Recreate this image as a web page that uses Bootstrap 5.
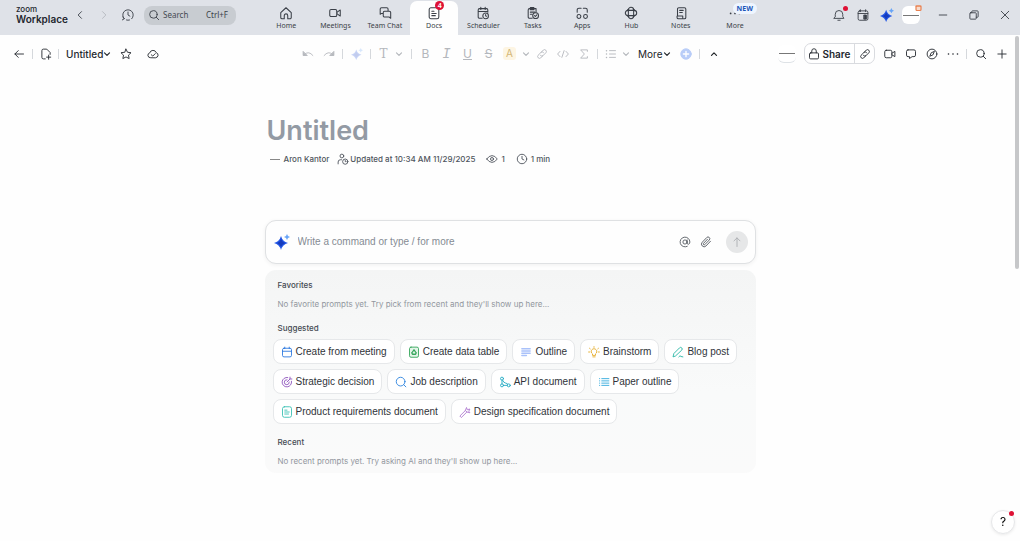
<!DOCTYPE html>
<html lang="en">
<head>
<meta charset="utf-8">
<meta name="viewport" content="width=device-width, initial-scale=1">
<title>Untitled - Zoom Docs</title>
<link href="https://cdn.jsdelivr.net/npm/bootstrap@5.3.0/dist/css/bootstrap.min.css" rel="stylesheet">
<style>
  body { font-family: Inter, "Liberation Sans", sans-serif; font-size: 10px; line-height: 14px; color: #2b2f36; background: #fefefe; }
  button { font-family: inherit; }
  svg { display: block; fill: none; stroke: currentColor; stroke-width: 1.2; stroke-linecap: round; stroke-linejoin: round; }
  .i8 { width: 8px; height: 8px; }
  .i12 { width: 12px; height: 12px; }
  .i14 { width: 14px; height: 14px; }
  .i16 { width: 16px; height: 16px; }

  /* window bar */
  .titlebar { height: 35px; background: #dfe2e8; color: #3a3f47; font-family: "Noto Sans", sans-serif; }
  .tb-left { width: 262px; height: 30px; padding-left: 16px; }
  .tb-right { width: 255px; height: 30px; }
  .brand { width: 52px; font-family: Inter, sans-serif; color: #23272e; line-height: 10px; padding-bottom: 2px; }
  .brand-top { font-size: 8px; font-weight: 500; }
  .brand-name { font-size: 10px; font-weight: 600; }
  .flat { border: 0; background: none; padding: 0; color: inherit; display: flex; align-items: center; justify-content: center; position: relative; flex: none; }
  .w24 { width: 24px; }
  .w31 { width: 31px; }
  .finder { width: 92px; height: 19px; border-radius: 8px; background: #c8ccd1; padding: 0 8px 0 4px; gap: 3px; font-size: 8px; }
  .finder input { border: 0; outline: 0; background: none; padding: 0; width: 40px; font-size: 8px; min-width: 0; }
  .finder input::placeholder { color: #444a52; opacity: 1; }
  .apptabs a { flex: 1 1 0; min-width: 0; height: 34px; margin: 1px 1px 0 0; padding-top: 5px; color: #3a3f47; text-decoration: none; font-size: 7px; line-height: 11px; border-radius: 7px 7px 0 0; position: relative; white-space: nowrap; }
  .apptabs a.wide { flex: 0 0 58px; }
  .apptabs a.active { background: #fefefe; }
  .count { position: absolute; top: 0; right: 14px; width: 9px; height: 9px; border-radius: 50%; background: #de1135; color: #fff; font-size: 7px; line-height: 9px; text-align: center; font-weight: 600; }
  .newtag { position: absolute; top: 2px; right: 7px; padding: 0 4px; border-radius: 6px; background: #eef5ff; color: #1d57b8; font-size: 7px; line-height: 11px; font-weight: 700; }
  .dot { position: absolute; width: 5px; height: 5px; border-radius: 50%; background: #de1135; }
  .avatar { width: 18px; height: 18px; border-radius: 6px; background: #fff; display: flex; align-items: center; justify-content: center; }
  .avatar::before { content: ""; width: 16px; height: 1px; background: #777; }

  /* document toolbar */
  .docbar { height: 37px; color: #24282f; }
  .db-left { width: 297px; padding-left: 8px; }
  .db-right { padding-right: 8px; }
  .tool { width: 21px; height: 21px; }
  .tool-s { width: 19px; height: 21px; }
  .chev { width: 11px; height: 21px; }
  .rule { width: 1px; height: 10px; margin: 0 3px; background: #d5d8dc; flex: none; }
  .faint { color: #b4b7bc; }
  .glyph { font-size: 12px; line-height: 12px; font-weight: 400; }
  .slab { font-family: "DejaVu Serif", serif; }
  .mono { font-family: "Liberation Mono", monospace; font-style: italic; font-size: 14px; }
  .tint { width: 13px; height: 13px; line-height: 13px; border-radius: 3px; background: #fdf5e3; color: #d3b675; font-size: 10px; }
  .docname { font-size: 10px; font-weight: 500; }
  .db-left .tool + .tool { margin-left: 6px; }
  .morebtn { font-size: 10px; gap: 1px; padding-left: 7px; }
  .share { height: 21px; border: 1px solid #d9dbdf; border-radius: 7px; background: #fff; }
  .share .main { font-size: 10px; font-weight: 600; gap: 2px; width: 50px; border-right: 1px solid #d9dbdf; }

  /* page */
  .sheet { max-width: 491px; padding-top: 43px; }
  .sheet h1 { margin: 0; padding-left: 2px; font-size: 27px; line-height: 32px; font-weight: 600; color: #939aa4; }
  .meta { padding: 5px 0 0 5px; font-size: 8px; line-height: 14px; font-weight: 500; color: #4f555d; }
  .meta .dash { width: 10px; height: 1px; background: #888; }
  .meta svg { margin: 0 3px 0 11px; }
  .meta svg.by { margin: 0 1px 0 8px; }
  .prompt { margin-top: 54px; height: 44px; border: 1px solid #dfe1e3; border-radius: 11px; background: #fefefe; padding: 0 7px 0 8px; box-shadow: 0 1px 4px rgba(0,0,0,.06); }
  .prompt input, .chip { font-family: "Liberation Sans", Arial, sans-serif; font-size: 10px; }
  .prompt input { border: 0; outline: 0; background: none; padding: 0; }
  .prompt input::placeholder { color: #858b93; opacity: 1; }
  .prompt .tool { color: #555a61; }
  .send { width: 22px; height: 22px; border-radius: 50%; background: #e6e7e8; color: #abaeb2; margin-left: 9px; }
  .ideas { margin-top: 6px; padding: 8px 8px 5px; border-radius: 11px; background: linear-gradient(#f4f5f5, #f9fafa 60%, #fafafa); }
  .ideas h2 { margin: 0; padding-left: 5px; font-size: 8px; line-height: 15px; font-weight: 500; color: #454b53; }
  .ideas p { margin: 4px 0 10px; padding-left: 5px; font-size: 8px; line-height: 14px; color: #92979e; }
  .ideas p:last-child { margin-bottom: 0; }
  .chips { gap: 5px; padding: 3px 0 11px; }
  .chip { height: 25px; padding: 0 7px; border: 1px solid #e6e8ea; border-radius: 8px; background: #fff; line-height: 14px; color: #2f3339; display: flex; align-items: center; gap: 3px; white-space: nowrap; }
  .thumb { position: absolute; right: 1px; top: 36px; width: 4px; height: 43%; border-radius: 2px; background: #c6c7c9; }
  .help { position: fixed; right: 5px; bottom: 7px; width: 24px; height: 24px; border-radius: 50%; border: 1px solid #e6e7e9; background: #fff; font-size: 12px; font-weight: 400; box-shadow: 0 1px 3px rgba(0,0,0,.08); }
</style>
</head>
<body class="position-relative min-vh-100">

<svg class="d-none" aria-hidden="true">
  <symbol id="left" viewBox="0 0 16 16"><path d="M10 3.500 5.500 8l4.500 4.500"/></symbol>
  <symbol id="right" viewBox="0 0 16 16"><path d="M6 3.500 10.500 8 6 12.500"/></symbol>
  <symbol id="down" viewBox="0 0 8 8"><path d="m1.500 2.800 2.500 2.500 2.500-2.500"/></symbol>
  <symbol id="up" viewBox="0 0 8 8"><path d="m1.500 5.300 2.500-2.500 2.500 2.500"/></symbol>
  <symbol id="lens" viewBox="0 0 16 16"><circle cx="7.200" cy="7.200" r="5"/><path d="m11 11 3.300 3.300"/></symbol>
  <symbol id="spark" viewBox="0 0 16 16"><path fill="#2458e6" stroke="none" d="M7 2Q8.500 7.500 14 9 8.500 10.500 7 16 5.500 10.500 0 9 5.500 7.500 7 2Z"/><path fill="#153bbd" stroke="none" d="M7 5Q8 8 11.500 9 8 10 7 13 6 10 3 9 6 8 7 5Z"/><path fill="#68a5f7" stroke="none" d="M13 0q.5 2.500 3 3-2.500.500-3 3-.5-2.500-3-3 2.500-.500 3-3Z"/></symbol>
  <symbol id="link" viewBox="0 0 16 16"><path d="m7 5.500 2.800-2.800a2.500 2.500 0 0 1 3.500 3.500L9.500 10A2.500 2.500 0 0 1 6 10M9 10.500l-2.800 2.800a2.500 2.500 0 0 1-3.500-3.500L6.500 6A2.500 2.500 0 0 1 10 6"/></symbol>
  <symbol id="cam" viewBox="0 0 16 16"><rect x="1" y="3" width="9.500" height="10" rx="2"/><path d="m10.500 7 4-2.500v7l-4-2.500"/></symbol>
  <symbol id="clock" viewBox="0 0 16 16"><circle cx="8" cy="8" r="6.300"/><path d="M8 4.500V8l2.500 1.200"/></symbol>
  <symbol id="note" viewBox="0 0 16 16"><rect x="2" y="1" width="12" height="14" rx="2.500"/><path d="M5 5.500h3M5 8h6M5 10.700h5"/></symbol>
</svg>

<header class="titlebar d-flex">
  <div class="tb-left d-flex align-items-center flex-shrink-0">
    <div class="brand"><div class="brand-top">zoom</div><div class="brand-name">Workplace</div></div>
    <button class="flat w24" aria-label="Back"><svg class="i12" stroke-width="1.600"><use href="#left"/></svg></button>
    <button class="flat w24 opacity-25" aria-label="Forward"><svg class="i12"><use href="#right"/></svg></button>
    <button class="flat w24 me-1" aria-label="History"><svg class="i12" viewBox="0 0 16 16"><path d="M3 13A7 7 0 1 1 13 13M6 14.700q2 .600 4 0M1 10.500 3 13l-2.500 1.500M8 4v4l2.500 1.500"/></svg></button>
    <label class="finder d-flex align-items-center">
      <svg class="i12 flex-shrink-0"><use href="#lens"/></svg>
      <input type="text" placeholder="Search" aria-label="Search">
      <span class="ms-auto">Ctrl+F</span>
    </label>
  </div>

  <nav class="apptabs d-flex flex-grow-1">
    <a href="#" class="d-flex flex-column align-items-center"><svg class="i14" viewBox="0 0 16 16"><path d="M2 7.500 8 2l6 5.500V13a1.500 1.500 0 0 1-1.500 1.500H10V11a2 2 0 0 0-4 0v3.500H3.500A1.500 1.500 0 0 1 2 13Z"/></svg>Home</a>
    <a href="#" class="d-flex flex-column align-items-center"><svg class="i14" viewBox="0 0 16 16"><rect x="2" y="4" width="8" height="8" rx="1.500"/><path d="m10.500 7 3.500-2.500v7L10.500 9"/></svg>Meetings</a>
    <a href="#" class="d-flex flex-column align-items-center"><svg class="i14" viewBox="0 0 16 16"><path d="M4 8.500 2.500 9.500V3.500a1.500 1.500 0 0 1 1.500-1.500h6a1.500 1.500 0 0 1 1.500 1.500v2M4 8.500h2M7.500 6H13a1.500 1.500 0 0 1 1.500 1.500v6.500l-2-1.500h-5A1.500 1.500 0 0 1 6 11V7.500A1.500 1.500 0 0 1 7.500 6Z"/></svg>Team Chat</a>
    <a href="#" class="active d-flex flex-column align-items-center" aria-current="page"><svg class="i14" viewBox="0 0 16 16"><rect x="2.500" y="2" width="11" height="12.500" rx="2"/><path d="M5.500 6H8M5.500 8.500h5M5.500 11h4"/></svg>Docs<span class="count">4</span></a>
    <a href="#" class="d-flex flex-column align-items-center"><svg class="i14" viewBox="0 0 16 16"><path d="M7 14H4a1.500 1.500 0 0 1-1.500-1.500v-8A1.500 1.500 0 0 1 4 3h8a1.500 1.500 0 0 1 1.500 1.500V7M2.500 6.300h11M5.500 1.500V4M10.500 1.500V4"/><circle cx="11" cy="11.300" r="3.200"/><path d="M11 9.800v1.500l1 .5"/></svg>Scheduler</a>
    <a href="#" class="d-flex flex-column align-items-center"><svg class="i14" viewBox="0 0 16 16"><path d="M7 14H4a1.500 1.500 0 0 1-1.500-1.500V4.500A1.500 1.500 0 0 1 4 3h7.500v4M5 1.800h4v2.500H5ZM5 7h5M5 9.500h2"/><circle cx="11" cy="11" r="3.300"/><path d="m9.700 11 1 1 1.700-1.900"/></svg>Tasks</a>
    <a href="#" class="d-flex flex-column align-items-center"><svg class="i14" viewBox="0 0 16 16"><circle cx="4.500" cy="12" r="2.200"/><circle cx="12" cy="12" r="2.200"/><path d="M2.500 7V4.500a2 2 0 0 1 2-2H7M9.500 2.500H12a2 2 0 0 1 2 2V7"/></svg>Apps</a>
    <a href="#" class="d-flex flex-column align-items-center"><svg class="i14" viewBox="0 0 16 16"><rect x="5" y="1.500" width="6" height="13" rx="3"/><rect x="1.500" y="5" width="13" height="6" rx="3"/><path d="M3.500 5.500Q4 4 5.500 3.500M10.500 3.500q1.500.500 2 2M3.500 10.500q.5 1.500 2 2M10.500 12.500q1.500-.5 2-2"/></svg>Hub</a>
    <a href="#" class="d-flex flex-column align-items-center"><svg class="i14" viewBox="0 0 16 16"><path d="M4 11V3.500A1.500 1.500 0 0 1 5.500 2H12a1.500 1.500 0 0 1 1.500 1.500v9.500a1.500 1.500 0 0 1-1.500 1.500H5A1.500 1.500 0 0 1 3.500 13v-1.500H10v2M6.500 5h4M6.500 7.500h3"/></svg>Notes</a>
    <a href="#" class="wide d-flex flex-column align-items-center"><svg class="i14" viewBox="0 0 16 16"><path stroke-width="2" d="M3 8.500h.01M8 8.500h.01M13 8.500h.01"/></svg>More<span class="newtag">NEW</span></a>
  </nav>

  <div class="tb-right d-flex justify-content-end flex-shrink-0">
    <button class="flat w24" aria-label="Notifications"><svg class="i12" viewBox="0 0 16 16"><path d="M1.500 12.500h13L13 10V7A5 5 0 0 0 3 7v3ZM6.500 15h3"/></svg><span class="dot" style="top:6px;right:3px"></span></button>
    <button class="flat w24" aria-label="Calendar"><svg class="i12" viewBox="0 0 16 16"><rect x="1.500" y="2.500" width="13" height="12.500" rx="2"/><path d="M1.500 6h13M4.500 1v2.500M11.500 1v2.500"/><rect x="9.500" y="8" width="3" height="5.500" fill="currentColor"/></svg></button>
    <button class="flat w24" aria-label="AI Companion"><svg class="i14"><use href="#spark"/></svg></button>
    <button class="flat w24 me-1" aria-label="Profile"><span class="avatar"></span><svg class="i8" style="position:absolute;top:4px;right:1px;color:#e98150" viewBox="0 0 8 8"><rect x="2" y="2" width="5" height="4.500" rx="1" fill="#f8dccc"/><path d="M2 2h5"/></svg></button>
    <button class="flat w31" aria-label="Minimize"><svg class="i12" viewBox="0 0 16 16"><path d="M3 8h10"/></svg></button>
    <button class="flat w31" aria-label="Restore"><svg class="i12" viewBox="0 0 16 16"><rect x="2.500" y="5" width="8.500" height="8.500" rx="1"/><path d="M5 5V3.500A1 1 0 0 1 6 2.500h6.500a1 1 0 0 1 1 1V10a1 1 0 0 1-1 1H11"/></svg></button>
    <button class="flat w31" aria-label="Close"><svg class="i12" viewBox="0 0 16 16"><path d="m3 3 10 10M13 3 3 13"/></svg></button>
  </div>
</header>

<div class="docbar d-flex align-items-center">
  <div class="db-left d-flex align-items-center flex-shrink-0">
    <button class="flat tool" aria-label="Back"><svg class="i12" viewBox="0 0 16 16"><path d="M14 8H2.500M7 3.500 2.500 8 7 12.500"/></svg></button>
    <span class="rule"></span>
    <button class="flat tool-s" aria-label="New document"><svg class="i12" viewBox="0 0 16 16"><path d="M7 14.500H4.500a2 2 0 0 1-2-2v-9a2 2 0 0 1 2-2H9L13.500 6v2.500M11.500 9.500v5.500M8.800 12.200h5.500"/></svg></button>
    <span class="rule"></span>
    <button class="flat docname ms-1">Untitled<svg class="i8"><use href="#down"/></svg></button>
    <button class="flat tool ms-1" aria-label="Favorite"><svg class="i12" viewBox="0 0 16 16"><path d="m8 1.500 2 4.200 4.700.600-3.400 3.200.900 4.600L8 11.900l-4.200 2.200.9-4.600L1.300 6.300 6 5.700Z"/></svg></button>
    <button class="flat tool" aria-label="Saved"><svg class="i12" viewBox="0 0 16 16"><path d="M4.500 13a3.300 3.300 0 0 1-.8-6.500 4.500 4.500 0 0 1 8.600-.3A3.500 3.500 0 0 1 11.800 13ZM5.700 9l2 1.800L11 7.500"/></svg></button>
  </div>

  <div class="d-flex align-items-center faint">
    <button class="flat tool" aria-label="Undo"><svg class="i12" viewBox="0 0 16 16"><path fill="currentColor" d="M1.500 5v5h5Z"/><path d="M4 8q5-4.500 10.500 2"/></svg></button>
    <button class="flat tool" aria-label="Redo"><svg class="i12" viewBox="0 0 16 16"><path fill="currentColor" d="M14.500 5v5h-5Z"/><path d="M12 8Q7 3.500 1.500 10"/></svg></button>
    <span class="rule"></span>
    <button class="flat tool opacity-25" aria-label="AI"><svg class="i12"><use href="#spark"/></svg></button>
    <span class="rule"></span>
    <button class="flat tool-s glyph slab">T</button>
    <button class="flat chev me-1" aria-label="Text style"><svg class="i8"><use href="#down"/></svg></button>
    <span class="rule"></span>
    <button class="flat tool glyph">B</button>
    <button class="flat tool glyph mono">I</button>
    <button class="flat tool glyph text-decoration-underline">U</button>
    <button class="flat tool glyph text-decoration-line-through">S</button>
    <button class="flat tool"><span class="tint">A</span></button>
    <button class="flat chev" aria-label="Text color"><svg class="i8"><use href="#down"/></svg></button>
    <button class="flat tool" aria-label="Link"><svg class="i12"><use href="#link"/></svg></button>
    <button class="flat tool" aria-label="Code"><svg class="i12" viewBox="0 0 16 16"><path d="M4 4.500.800 8 4 11.500M12 4.500 15.200 8 12 11.500M9.500 3.500l-3 9"/></svg></button>
    <button class="flat tool" aria-label="Formula"><svg class="i12" viewBox="0 0 16 16"><path d="M12.500 4.500v-2h-9L8.500 8l-5 5.500h9v-2"/></svg></button>
    <span class="rule"></span>
    <button class="flat tool-s" aria-label="List"><svg class="i12" viewBox="0 0 16 16"><path d="M6 3.500h8M6 8h8M6 12.500h8"/><path stroke-width="2" d="M2 3.500h.01M2 8h.01M2 12.500h.01"/></svg></button>
    <button class="flat chev" aria-label="List style"><svg class="i8"><use href="#down"/></svg></button>
    <button class="flat morebtn text-dark">More<svg class="i8"><use href="#down"/></svg></button>
    <button class="flat tool ms-1" aria-label="Insert"><svg class="i12" viewBox="0 0 16 16"><circle cx="8" cy="8" r="7" fill="#b9cdf8" stroke="#b9cdf8"/><path stroke="#fff" stroke-width="1.800" d="M8 4.500v7M4.500 8h7"/></svg></button>
    <span class="rule"></span>
    <button class="flat tool text-dark" aria-label="Collapse toolbar"><svg class="i8"><use href="#up"/></svg></button>
  </div>

  <div class="db-right d-flex align-items-center ms-auto">
    <span class="avatar me-2 border-bottom"></span>
    <div class="share d-flex me-1">
      <button class="flat main"><svg class="i12" viewBox="0 0 16 16"><rect x="2" y="6.500" width="12" height="8" rx="1.500"/><path d="M5 6.500V4a3 3 0 0 1 6 0v2.500"/></svg>Share</button>
      <button class="flat tool-s h-100" aria-label="Copy link"><svg class="i12"><use href="#link"/></svg></button>
    </div>
    <button class="flat tool" aria-label="Meet"><svg class="i12"><use href="#cam"/></svg></button>
    <button class="flat tool" aria-label="Comments"><svg class="i12" viewBox="0 0 16 16"><path d="M4 2.500h8A2 2 0 0 1 14 4.500v5a2 2 0 0 1-2 2H9.500L6 14v-2.500H4a2 2 0 0 1-2-2v-5a2 2 0 0 1 2-2Z"/></svg></button>
    <button class="flat tool" aria-label="Explore"><svg class="i12" viewBox="0 0 16 16"><circle cx="8" cy="8" r="6.500"/><path d="M11 5 9.200 9.200 5 11l1.800-4.200Z"/></svg></button>
    <button class="flat tool" aria-label="More options"><svg class="i12" viewBox="0 0 16 16"><path stroke-width="2.200" d="M2 8h.01M8 8h.01M14 8h.01"/></svg></button>
    <span class="rule"></span>
    <button class="flat tool" aria-label="Find"><svg class="i12"><use href="#lens"/></svg></button>
    <button class="flat tool" aria-label="Add"><svg class="i12" viewBox="0 0 16 16"><path d="M8 2.500v11M2.500 8h11"/></svg></button>
  </div>
</div>

<main class="sheet mx-auto">
  <h1>Untitled</h1>
  <div class="meta d-flex align-items-center">
    <span class="dash me-1"></span><span>Aron Kantor</span>
    <svg class="i12 by" viewBox="0 0 16 16"><circle cx="6.500" cy="4" r="2.500"/><path d="M1.500 14.500V12a3 3 0 0 1 3-3H6"/><circle cx="11" cy="11.500" r="3.500"/><path d="M11 10v1.500h1.200"/></svg><span>Updated at 10:34 AM 11/29/2025</span>
    <svg class="i12" viewBox="0 0 16 16"><path d="M1 8q3-4.500 7-4.500T15 8q-3 4.500-7 4.500T1 8Z"/><circle cx="8" cy="8" r="2"/></svg><span>1</span>
    <svg class="i12"><use href="#clock"/></svg><span>1 min</span>
  </div>

  <div class="prompt d-flex align-items-center">
    <svg class="i16 me-2"><use href="#spark"/></svg>
    <input class="flex-grow-1" type="text" placeholder="Write a command or type / for more" aria-label="Prompt">
    <button class="flat tool" aria-label="Mention"><svg class="i12" viewBox="0 0 16 16"><circle cx="8" cy="8" r="2.800"/><path d="M10.800 5.200V9.500q.2 1.500 1.700 1.500 2-.500 2-3A6.500 6.500 0 1 0 11 13.800"/></svg></button>
    <button class="flat tool" aria-label="Attach"><svg class="i12" viewBox="0 0 16 16"><path d="m14 7-6 6.300a3.500 3.500 0 0 1-5-5L9 2a2.300 2.300 0 0 1 3.400 3.300l-6 6.200A1.200 1.200 0 0 1 4.700 9.800L10 4.300"/></svg></button>
    <button class="flat send" aria-label="Send"><svg class="i12" viewBox="0 0 16 16"><path d="M8 14V2.500M4 6.500l4-4 4 4"/></svg></button>
  </div>

  <section class="ideas">
    <h2>Favorites</h2>
    <p>No favorite prompts yet. Try pick from recent and they'll show up here...</p>
    <h2>Suggested</h2>
    <div class="chips d-flex flex-wrap">
      <button class="chip"><svg class="i12" style="color:#2f7be0" viewBox="0 0 16 16"><rect x="2" y="3" width="12" height="11.500" rx="2"/><path d="M2 7h12M5 1.500v2M11 1.500v2"/></svg>Create from meeting</button>
      <button class="chip"><svg class="i12" style="color:#35a65b" viewBox="0 0 16 16"><rect x="2" y="1.500" width="12" height="13.500" rx="2" fill="#e4f5e9"/><path stroke-width="1.800" d="M6 8 8 5l2 3M5 9l1 2h2M11 9l-1 2H9"/></svg>Create data table</button>
      <button class="chip"><svg class="i12" style="color:#a9c1fa" viewBox="0 0 16 16"><path stroke-width="2" d="M2.500 3.500h11M2.500 6.500h11M2.500 9.500h11M2.500 12.500h6"/></svg>Outline</button>
      <button class="chip"><svg class="i12" style="color:#e5ad29" viewBox="0 0 16 16"><path d="M6 12v-1.500a3.700 3.700 0 1 1 4 0V12ZM6.500 14.500h3M8 .800v1M2 3l1 .8M14 3l-1 .8M.800 8h1.500M15.200 8h-1.500"/></svg>Brainstorm</button>
      <button class="chip"><svg class="i12" style="color:#26b5a4" viewBox="0 0 16 16"><path d="M1.500 14 2.500 10 10 2.500a1.800 1.800 0 0 1 3 3L5 13ZM9 14.500q2-3 3-.500l2.500.500"/></svg>Blog post</button>
      <button class="chip"><svg class="i12" style="color:#8f55bd" viewBox="0 0 16 16"><path d="M14 7a6.300 6.300 0 1 1-5-5M11 8a3.300 3.300 0 1 1-3-3M8 8l4-4V1.500M12 4h2.500"/></svg>Strategic decision</button>
      <button class="chip"><svg class="i12" style="color:#2d83df" viewBox="0 0 16 16"><circle cx="7.500" cy="7.500" r="5.800"/><path d="m11.500 11.500 3 3"/></svg>Job description</button>
      <button class="chip"><svg class="i12" style="color:#25acc4" viewBox="0 0 16 16"><circle cx="4" cy="3.500" r="2"/><circle cx="4" cy="12.500" r="2"/><circle cx="13" cy="12.500" r="2"/><path d="M4 5.500v5M5 6q1 3 4 3.500t2.500 1.500M6 12.500h5"/></svg>API document</button>
      <button class="chip"><svg class="i12" style="color:#32a9dc" viewBox="0 0 16 16"><path d="M5 3.500h9.500M5 6.500h9.500M5 9.500h9.500M5 12.500h9.500M2 3.500h.3M2 6.500h.3M2 9.500h.3M2 12.500h.3"/></svg>Paper outline</button>
      <button class="chip"><svg class="i12" style="color:#3bc1b4"><use href="#note"/></svg>Product requirements document</button>
      <button class="chip"><svg class="i12" style="color:#b07bd0" viewBox="0 0 16 16"><path d="m1.500 13 7-7 2 2-7 7ZM8.500 6l1.500-4 1 3 3.500-1-1.500 3 1.500 2-4-1"/></svg>Design specification document</button>
    </div>
    <h2>Recent</h2>
    <p>No recent prompts yet. Try asking AI and they'll show up here...</p>
  </section>
</main>

<div class="thumb"></div>
<button class="help p-0" aria-label="Help">?<span class="dot" style="top:0;right:0"></span></button>

<script src="https://cdn.jsdelivr.net/npm/bootstrap@5.3.0/dist/js/bootstrap.bundle.min.js"></script>
</body>
</html>
